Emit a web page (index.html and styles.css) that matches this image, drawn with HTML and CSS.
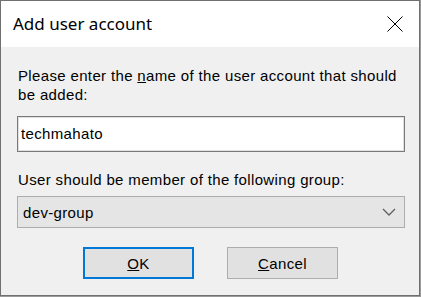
FILE: index.html
```html
<!DOCTYPE html>
<html lang="en">
<head>
  <meta charset="UTF-8">
  <meta name="viewport" content="width=device-width, initial-scale=1.0">
  <title>Add user account</title>
  <link rel="stylesheet" href="styles.css">
</head>
<body>
  <div class="dialog">
    <div class="titlebar">
      <span class="title">Add user account</span>
      <span class="close">
        <svg width="16" height="16" viewBox="0 0 16 16"><path d="M0.5 0.5 L15.5 15.5 M15.5 0.5 L0.5 15.5" stroke="#000" stroke-width="1" fill="none"/></svg>
      </span>
    </div>
    <div class="content">
      <label class="label" for="username">Please enter the <u>n</u>ame of the user account that should be added:</label>
      <div class="textbox">techmahato</div>
      <label class="label group-label">User should be member of the following <u>g</u>roup:</label>
      <div class="combo">
        <span>dev-group</span>
        <svg width="14" height="8" viewBox="0 0 14 8"><path d="M1 1 L7 7 L13 1" stroke="#606060" stroke-width="1.3" fill="none"/></svg>
      </div>
      <div class="buttons">
        <div class="btn default"><u>O</u>K</div>
        <div class="btn"><u>C</u>ancel</div>
      </div>
    </div>
  </div>
</body>
</html>
```

FILE: styles.css
```css
body { margin: 0; background: #9a9a9a; font-family: "Liberation Sans", Arial, sans-serif; }
.dialog { width: 418px; height: 294px; border: 1px solid #707070; background: #f0f0f0; display: flex; flex-direction: column; }
.titlebar { height: 46px; background: #fff; display: flex; align-items: center; justify-content: space-between; padding: 0 16px 0 12px; }
.title { font-family: "Noto Sans", "Open Sans", sans-serif; font-size: 17px; color: #000; padding-bottom: 2px; }
.close { width: 16px; height: 16px; display: flex; margin-top: -1px; }
.content { padding: 19px 14px 0 16px; display: flex; flex-direction: column; letter-spacing: 0.35px; }
.label { font-size: 15px; line-height: 19px; color: #000; padding-left: 1px; }
.textbox { margin-top: 12px; height: 34px; border: 1px solid #7a7a7a; box-shadow: inset 0 0 0 1px #e0e0e0; background: #fff; font-size: 15px; line-height: 34px; padding-left: 3px; }
.group-label { margin-top: 18px; }
.combo { margin-top: 7px; height: 30px; border: 1px solid #adadad; background: #e5e5e5; display: flex; align-items: center; justify-content: space-between; padding: 0 8px 0 5px; font-size: 15px; }
.combo span { padding-top: 1px; }
.buttons { margin-top: 19px; display: flex; justify-content: center; gap: 33px; padding-right: 1px; }
.btn { width: 109px; height: 30px; border: 1px solid #adadad; background: #e1e1e1; font-size: 15px; display: flex; align-items: center; justify-content: center; }
.btn.default { width: 107px; height: 28px; border: 2px solid #0078d7; }
```
